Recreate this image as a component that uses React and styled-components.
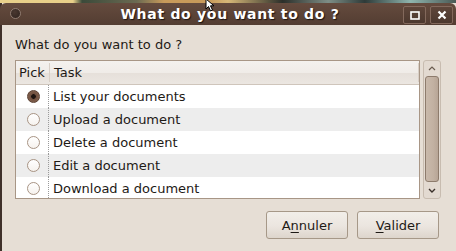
import React, { useState } from "react";
import styled, { createGlobalStyle } from "styled-components";

const Global = createGlobalStyle`
  html, body {
    margin: 0;
    padding: 0;
    width: 456px;
    height: 251px;
    overflow: hidden;
    background: #e6ded5;
    font-family: "DejaVu Sans", "Liberation Sans", sans-serif;
  }
`;

const Screen = styled.div`
  position: relative;
  width: 456px;
  height: 251px;
  display: flex;
  flex-direction: column;
  overflow: hidden;
`;

const Wallpaper = styled.div`
  height: 3px;
  flex-shrink: 0;
  background: linear-gradient(
    90deg,
    #e9d08a 0%,
    #e9d08a 16%,
    #3b4a3a 18%,
    #6b6a52 30%,
    #c89a5a 36%,
    #c89a5a 46%,
    #d7b878 50%,
    #2c2f2a 62%,
    #7e8e86 72%,
    #2e3a38 80%,
    #8fb5ae 90%,
    #4a5a56 100%
  );
`;

const Window = styled.div`
  flex: 1;
  display: flex;
  flex-direction: column;
  border-left: 2px solid #3f302a;
  background: #e6ded5;
`;

const TitleBar = styled.div`
  position: relative;
  height: 22px;
  flex-shrink: 0;
  display: flex;
  align-items: center;
  justify-content: center;
  background: linear-gradient(#654b3e, #533d32);
  border-radius: 6px 6px 0 0;
  margin-left: -2px;
  padding-left: 2px;
`;

const TitleText = styled.div`
  color: #ffffff;
  font-weight: bold;
  font-size: 14px;
  letter-spacing: 0.7px;
  text-shadow: 1px 1px 1px #1e1410;
  margin-left: 2px;
`;

const MenuDot = styled.div`
  position: absolute;
  left: 10px;
  top: 5px;
  width: 9px;
  height: 9px;
  border-radius: 50%;
  border: 1px solid #8f7b70;
  background: radial-gradient(circle at 40% 35%, #4a3830, #2e221d);
`;

const WinButtons = styled.div`
  position: absolute;
  right: 3px;
  top: 3px;
  display: flex;
  gap: 4px;
`;

const WinButton = styled.div`
  width: 21px;
  height: 16px;
  border: 1px solid #83695c;
  border-radius: 2px;
  display: flex;
  align-items: center;
  justify-content: center;
  background: linear-gradient(#5e463a, #4c382e);
`;

const Body = styled.div`
  flex: 1;
  display: flex;
  flex-direction: column;
  padding: 0 15px 0 13px;
`;

const Prompt = styled.div`
  font-size: 13px;
  color: #1e1a16;
  height: 35px;
  line-height: 16px;
  padding-top: 12px;
  box-sizing: border-box;
`;

const ListArea = styled.div`
  display: flex;
  gap: 3px;
  height: 139px;
`;

const Frame = styled.div`
  width: 406px;
  box-sizing: border-box;
  border: 1px solid #a89686;
  background: #ffffff;
  overflow: hidden;
`;

const Header = styled.div`
  height: 24px;
  display: flex;
  align-items: stretch;
  background: linear-gradient(#f4f1ee 0%, #f0ece8 50%, #e6e0da 52%, #ebe6e1 100%);
  border-bottom: 1px solid #cfc5bb;
  font-size: 13px;
  color: #1e1a16;
  box-sizing: border-box;
`;

const HeadCell = styled.div`
  display: flex;
  align-items: center;
  padding-left: ${(p) => p.$pad}px;
  width: ${(p) => (p.$w ? `${p.$w}px` : "auto")};
  flex: ${(p) => (p.$w ? "none" : 1)};
  box-sizing: border-box;
  border-right: 1px solid #d8cfc6;
  margin: 2px 0;
`;

const Row = styled.div`
  height: 23px;
  display: flex;
  align-items: center;
  background: ${(p) => (p.$odd ? "#ededed" : "#ffffff")};
  font-size: 13px;
  color: #1e1a16;
  cursor: default;
`;

const PickCell = styled.div`
  width: 33px;
  height: 100%;
  display: flex;
  align-items: center;
  justify-content: center;
  padding-left: 2px;
  box-sizing: border-box;
  border-right: 1px dotted #9a9a9a;
`;

const Radio = styled.div`
  width: 13px;
  height: 13px;
  border-radius: 50%;
  box-sizing: border-box;
  border: 1px solid ${(p) => (p.$on ? "#5a4032" : "#a89484")};
  background: ${(p) =>
    p.$on
      ? "radial-gradient(circle, #1e1410 0 2px, #6f4f3e 2.6px, #8e6c58 100%)"
      : "linear-gradient(#ffffff, #f6f2ee)"};
`;

const TaskCell = styled.div`
  padding-left: 4px;
`;

const Scrollbar = styled.div`
  width: 18px;
  box-sizing: border-box;
  border: 1px solid #c8bcb0;
  border-radius: 3px;
  background: #e3dad1;
  display: flex;
  flex-direction: column;
  align-items: center;
`;

const Arrow = styled.div`
  height: 15px;
  display: flex;
  align-items: center;
  justify-content: center;
`;

const Thumb = styled.div`
  flex: 1;
  width: 14px;
  box-sizing: border-box;
  border: 1px solid #8d7b6c;
  border-radius: 3px;
  background: linear-gradient(90deg, #c9b9ab, #c2b1a2 60%, #b7a596);
  margin: 0 0 1px;
`;

const Buttons = styled.div`
  display: flex;
  justify-content: flex-end;
  gap: 9px;
  margin-top: 12px;
  padding-right: 2px;
`;

const Button = styled.button`
  width: 82px;
  height: 28px;
  border: 1px solid #a69888;
  border-radius: 3px;
  background: linear-gradient(#f2eee9 0%, #ebe5df 55%, #ddd5cc 100%);
  font-family: "DejaVu Sans", "Liberation Sans", sans-serif;
  font-size: 13px;
  color: #1e1a16;
  padding: 0;
  u {
    text-decoration: underline;
    text-underline-offset: 2px;
  }
`;

const Cursor = styled.svg`
  position: absolute;
  left: 205px;
  top: -2px;
`;

const tasks = [
  "List your documents",
  "Upload a document",
  "Delete a document",
  "Edit a document",
  "Download a document",
];

export default function App() {
  const [picked, setPicked] = useState(0);
  return (
    <Screen>
      <Global />
      <Wallpaper />
      <Window>
        <TitleBar>
          <MenuDot />
          <TitleText>What do you want to do ?</TitleText>
          <WinButtons>
            <WinButton>
              <svg width="10" height="9" viewBox="0 0 10 9">
                <rect x="1" y="1" width="8" height="7" fill="none" stroke="#fff" strokeWidth="1.6" />
              </svg>
            </WinButton>
            <WinButton>
              <svg width="10" height="10" viewBox="0 0 10 10">
                <path d="M1.5 1.5 L8.5 8.5 M8.5 1.5 L1.5 8.5" stroke="#fff" strokeWidth="2.2" />
              </svg>
            </WinButton>
          </WinButtons>
        </TitleBar>
        <Body>
          <Prompt>What do you want to do ?</Prompt>
          <ListArea>
            <Frame>
              <Header>
                <HeadCell $w={34} $pad={3}>
                  Pick
                </HeadCell>
                <HeadCell $pad={4}>Task</HeadCell>
              </Header>
              {tasks.map((t, i) => (
                <Row key={t} $odd={i % 2 === 1} onClick={() => setPicked(i)}>
                  <PickCell>
                    <Radio $on={picked === i} />
                  </PickCell>
                  <TaskCell>{t}</TaskCell>
                </Row>
              ))}
            </Frame>
            <Scrollbar>
              <Arrow>
                <svg width="8" height="5" viewBox="0 0 8 5">
                  <path d="M1 4 L4 1 L7 4" fill="none" stroke="#6a5c50" strokeWidth="1.2" />
                </svg>
              </Arrow>
              <Thumb />
              <Arrow>
                <svg width="8" height="5" viewBox="0 0 8 5">
                  <path d="M1 1 L4 4 L7 1" fill="none" stroke="#3a302a" strokeWidth="1.4" />
                </svg>
              </Arrow>
            </Scrollbar>
          </ListArea>
          <Buttons>
            <Button>
              A<u>n</u>nuler
            </Button>
            <Button>
              <u>V</u>alider
            </Button>
          </Buttons>
        </Body>
      </Window>
      <Cursor width="12" height="14" viewBox="0 0 12 14">
        <path d="M1 1 L1 11 L3.5 8.5 L5.5 13 L7.5 12 L5.5 7.8 L9 7.8 Z" fill="#fff" stroke="#000" strokeWidth="1" />
      </Cursor>
    </Screen>
  );
}
